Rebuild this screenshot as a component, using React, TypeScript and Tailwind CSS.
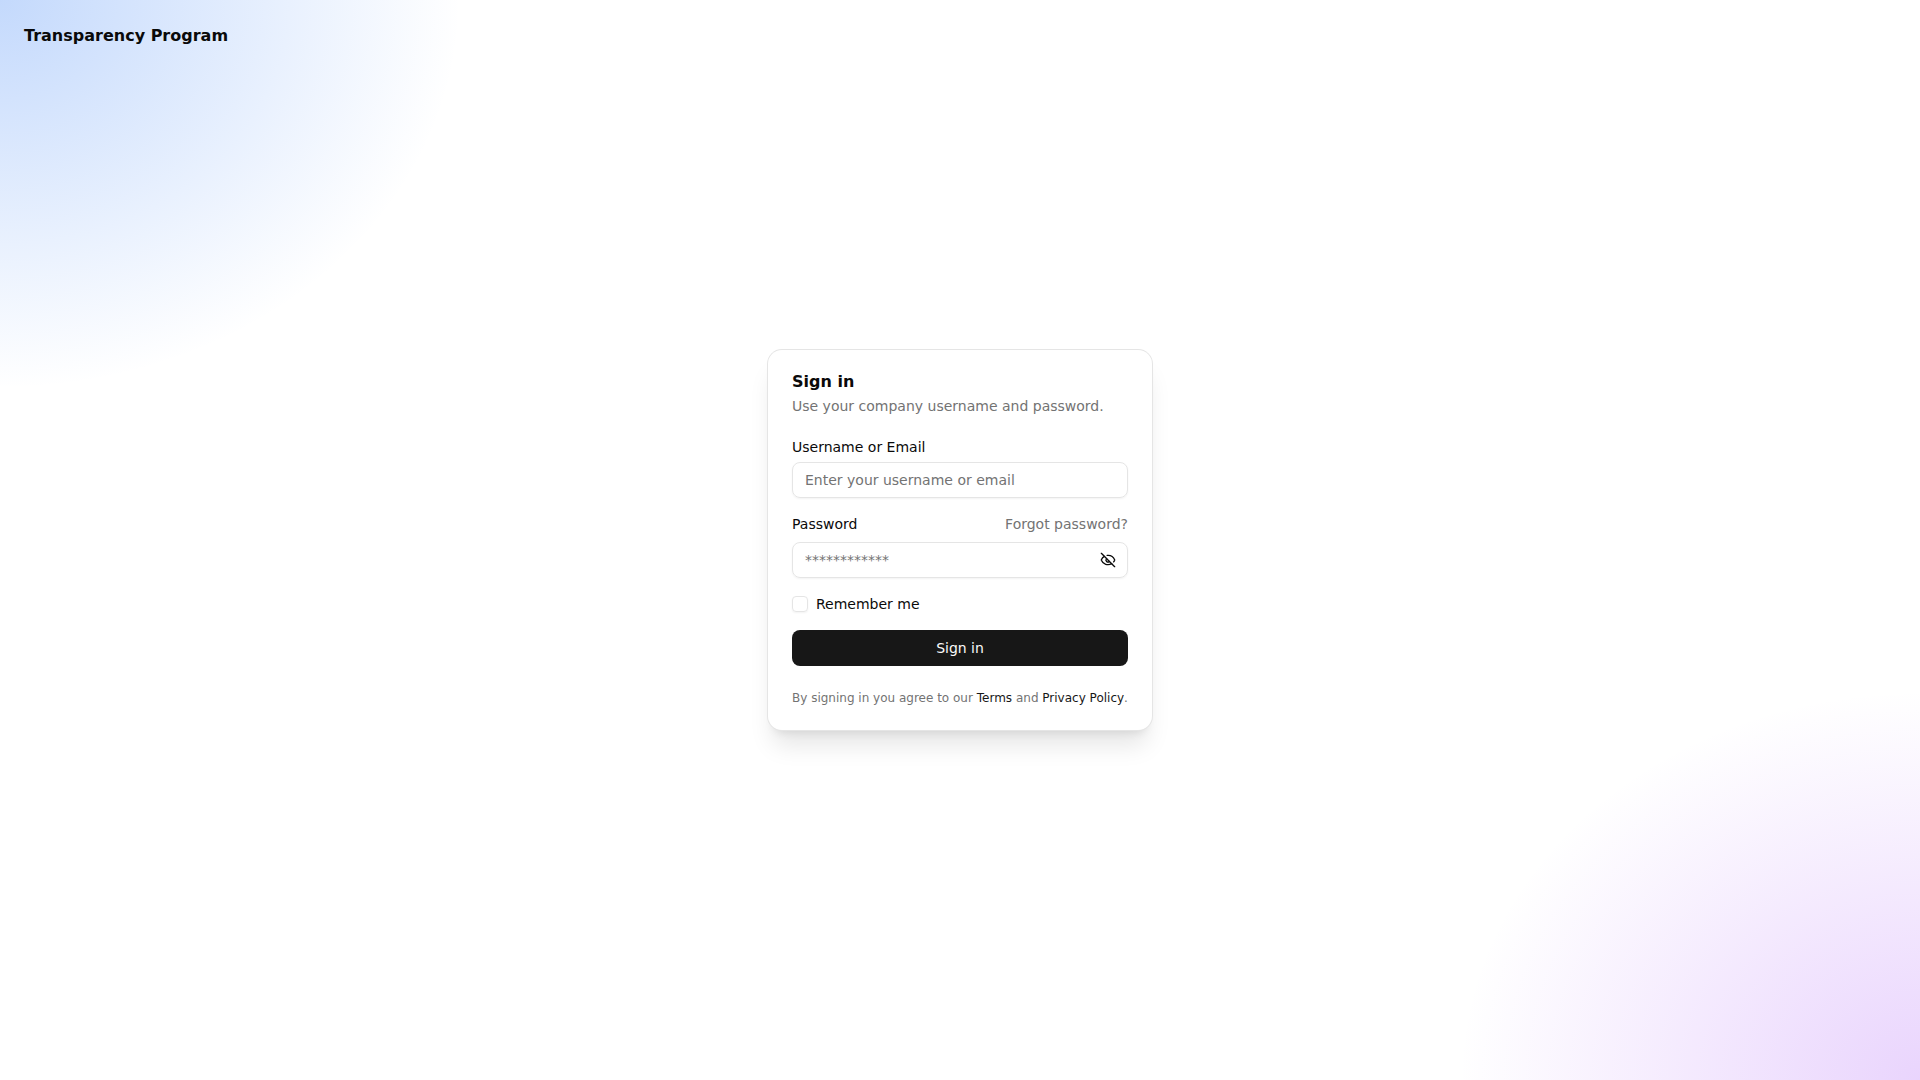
import { useState } from "react";
import type { FormEvent } from "react";
import { Eye, EyeOff } from "lucide-react";

const inputClass =
  "h-9 w-full min-w-0 rounded-lg border border-neutral-200 bg-transparent px-3 py-1 text-sm shadow-xs outline-none placeholder:text-neutral-500 focus-visible:border-neutral-400 focus-visible:ring-[3px] focus-visible:ring-neutral-400/50";

function PasswordInput() {
  const [visible, setVisible] = useState(false);

  return (
    <div className="relative">
      <input
        id="password"
        name="password"
        type={visible ? "text" : "password"}
        placeholder="************"
        autoComplete="current-password"
        className={`${inputClass} pr-10`}
      />
      <button
        type="button"
        onClick={() => setVisible((v) => !v)}
        aria-label={visible ? "Hide password" : "Show password"}
        className="absolute inset-y-0 right-0 flex items-center px-3"
      >
        {visible ? <Eye className="size-4" /> : <EyeOff className="size-4" />}
      </button>
    </div>
  );
}

function LoginForm() {
  const handleSubmit = (e: FormEvent) => {
    e.preventDefault();
  };

  return (
    <form onSubmit={handleSubmit} className="grid gap-4">
      <div className="grid gap-2">
        <label htmlFor="username" className="text-sm leading-none font-medium">
          Username or Email
        </label>
        <input
          id="username"
          name="username"
          type="text"
          placeholder="Enter your username or email"
          autoComplete="username"
          className={inputClass}
        />
      </div>

      <div className="grid gap-2">
        <div className="flex items-center justify-between">
          <label htmlFor="password" className="text-sm leading-none font-medium">
            Password
          </label>
          <a href="#forgot" className="text-sm text-neutral-500 hover:underline">
            Forgot password?
          </a>
        </div>
        <PasswordInput />
      </div>

      <div className="flex h-5 items-center gap-2">
        <input
          id="remember"
          name="remember"
          type="checkbox"
          className="size-4 shrink-0 appearance-none rounded-sm border border-neutral-200 shadow-xs checked:border-neutral-900 checked:bg-neutral-900"
        />
        <label htmlFor="remember" className="text-sm leading-none">
          Remember me
        </label>
      </div>

      <button
        type="submit"
        className="h-9 w-full rounded-lg bg-neutral-900 px-4 text-sm font-medium text-neutral-50 hover:bg-neutral-900/90"
      >
        Sign in
      </button>
    </form>
  );
}

export default function App() {
  return (
    <div className="relative flex min-h-screen flex-col bg-white bg-[radial-gradient(40%_60%_at_0%_0%,rgba(59,130,246,0.3),transparent_60%),radial-gradient(40%_60%_at_100%_100%,rgba(168,85,247,0.25),transparent_60%)] font-['DejaVu_Sans',sans-serif] text-neutral-950 antialiased">
      <header className="absolute inset-x-0 top-0 p-6">
        <span className="font-semibold">Transparency Program</span>
      </header>

      <main className="flex flex-1 items-center justify-center p-6">
        <div className="flex w-full max-w-sm flex-col gap-6 rounded-[14px] bg-white p-6 shadow-xl ring-1 ring-neutral-200">
          <div className="grid gap-1.5">
            <h1 className="leading-none font-semibold">Sign in</h1>
            <p className="text-sm text-neutral-500">
              Use your company username and password.
            </p>
          </div>

          <LoginForm />

          <p className="text-xs whitespace-nowrap text-neutral-500">
            By signing in you agree to our{" "}
            <a href="#terms" className="font-medium text-neutral-900 hover:underline">
              Terms
            </a>{" "}
            and{" "}
            <a href="#privacy" className="font-medium text-neutral-900 hover:underline">
              Privacy Policy
            </a>
            .
          </p>
        </div>
      </main>
    </div>
  );
}
